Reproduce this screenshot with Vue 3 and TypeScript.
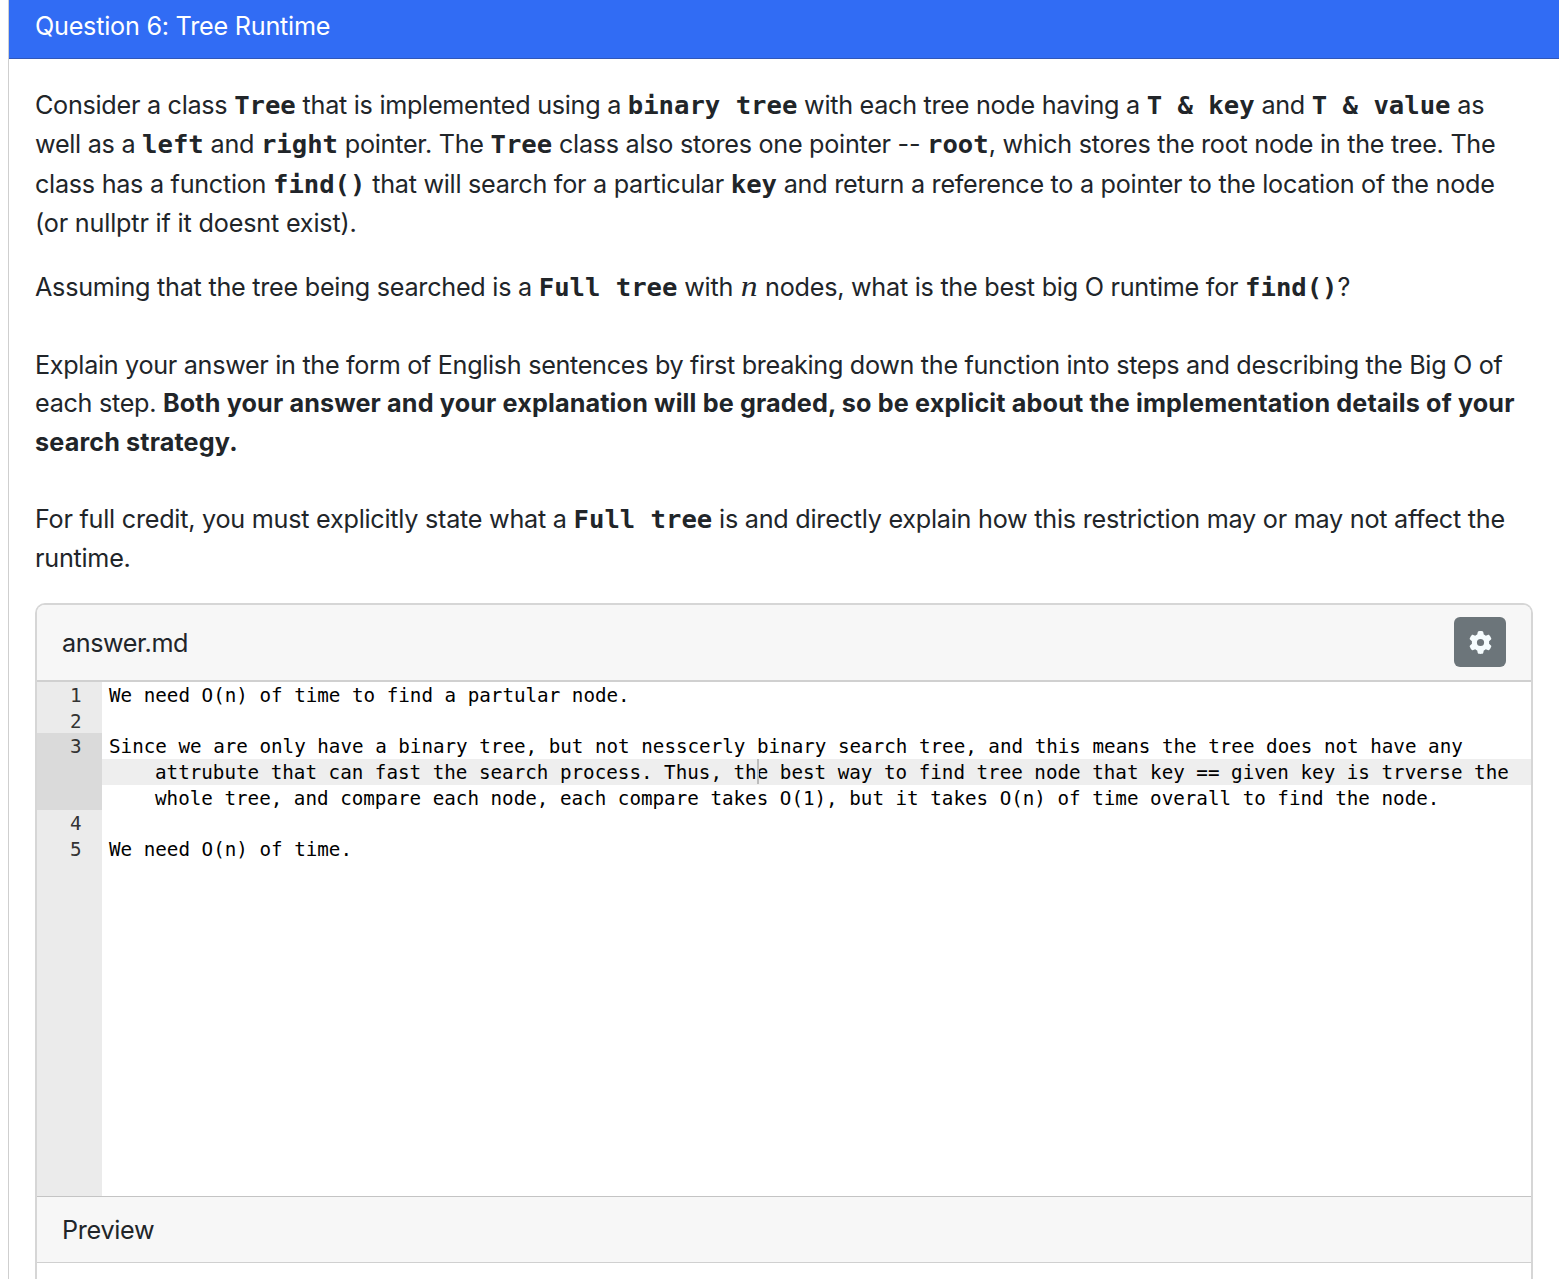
<script setup lang="ts">
interface Segment {
  text: string
  kind?: 'code' | 'bold' | 'math'
}
interface Line {
  parts: Segment[]
  spacing: number
}
interface Paragraph {
  name: string
  lines: Line[]
}

const t = (text: string): Segment => ({ text })
const c = (text: string): Segment => ({ text, kind: 'code' })
const b = (text: string): Segment => ({ text, kind: 'bold' })
const m = (text: string): Segment => ({ text, kind: 'math' })

const paragraphs: Paragraph[] = [
  {
    name: 'intro',
    lines: [
      { spacing: -0.285, parts: [t('Consider a class '), c('Tree'), t(' that is implemented using a '), c('binary tree'), t(' with each tree node having a '), c('T & key'), t(' and '), c('T & value'), t(' as')] },
      { spacing: -0.28, parts: [t('well as a '), c('left'), t(' and '), c('right'), t(' pointer. The '), c('Tree'), t(' class also stores one pointer -- '), c('root'), t(', which stores the root node in the tree. The')] },
      { spacing: -0.28, parts: [t('class has a function '), c('find()'), t(' that will search for a particular '), c('key'), t(' and return a reference to a pointer to the location of the node')] },
      { spacing: -0.18, parts: [t('(or nullptr if it doesnt exist).')] },
    ],
  },
  {
    name: 'prompt',
    lines: [
      { spacing: -0.26, parts: [t('Assuming that the tree being searched is a '), c('Full tree'), t(' with '), m('n'), t(' nodes, what is the best big O runtime for '), c('find()'), t('?')] },
    ],
  },
  {
    name: 'explain',
    lines: [
      { spacing: -0.315, parts: [t('Explain your answer in the form of English sentences by first breaking down the function into steps and describing the Big O of')] },
      { spacing: -0.3, parts: [t('each step. '), b('Both your answer and your explanation will be graded, so be explicit about the implementation details of your')] },
      { spacing: -0.3, parts: [b('search strategy.')] },
    ],
  },
  {
    name: 'credit',
    lines: [
      { spacing: -0.25, parts: [t('For full credit, you must explicitly state what a '), c('Full tree'), t(' is and directly explain how this restriction may or may not affect the')] },
      { spacing: -0.25, parts: [t('runtime.')] },
    ],
  },
]

const source = [
  { no: 1, rows: ['We need O(n) of time to find a partular node.'] },
  { no: 2, rows: [''] },
  {
    no: 3,
    current: 1,
    rows: [
      'Since we are only have a binary tree, but not nesscerly binary search tree, and this means the tree does not have any',
      'attrubute that can fast the search process. Thus, the best way to find tree node that key == given key is trverse the',
      'whole tree, and compare each node, each compare takes O(1), but it takes O(n) of time overall to find the node.',
    ],
  },
  { no: 4, rows: [''] },
  { no: 5, rows: ['We need O(n) of time.'] },
]
</script>

<template>
  <main class="card">
    <header class="title">Question 6: Tree Runtime</header>
    <div class="body">
      <section v-for="p in paragraphs" :key="p.name" :class="['para', p.name]">
        <div v-for="(line, i) in p.lines" :key="i" class="line" :style="{ letterSpacing: line.spacing + 'px' }">
          <span v-for="(s, j) in line.parts" :key="j" :class="s.kind">{{ s.text }}</span>
        </div>
      </section>
      <div class="panel">
        <div class="file-head">
          <span class="file-name">answer.md</span>
          <button class="settings" aria-label="Settings">
            <svg viewBox="0 0 512 512" width="23" height="23">
              <path fill="#f5fcfe" d="M495.9 166.6c3.2 8.7 .5 18.4-6.4 24.6l-43.3 39.4c1.1 8.3 1.7 16.8 1.7 25.4s-.6 17.1-1.7 25.4l43.3 39.4c6.9 6.2 9.6 15.9 6.4 24.6c-4.4 11.9-9.7 23.3-15.8 34.3l-4.7 8.1c-6.6 11-14 21.4-22.1 31.2c-5.9 7.2-15.7 9.6-24.5 6.8l-55.7-17.7c-13.4 10.3-28.2 18.9-44 25.4l-12.5 57.1c-2 9.1-9 16.3-18.2 17.8c-13.8 2.3-28 3.5-42.5 3.5s-28.7-1.2-42.5-3.5c-9.2-1.5-16.2-8.7-18.2-17.8l-12.5-57.1c-15.8-6.5-30.6-15.1-44-25.4L83.1 425.9c-8.8 2.8-18.6 .3-24.5-6.8c-8.1-9.8-15.5-20.2-22.1-31.2l-4.7-8.1c-6.1-11-11.4-22.4-15.8-34.3c-3.2-8.7-.5-18.4 6.4-24.6l43.3-39.4C64.6 273.1 64 264.6 64 256s.6-17.1 1.7-25.4L22.4 191.2c-6.9-6.2-9.6-15.9-6.4-24.6c4.4-11.9 9.7-23.3 15.8-34.3l4.7-8.1c6.6-11 14-21.4 22.1-31.2c5.9-7.2 15.7-9.6 24.5-6.8l55.7 17.7c13.4-10.3 28.2-18.9 44-25.4l12.5-57.1c2-9.1 9-16.3 18.2-17.8C227.3 1.2 241.5 0 256 0s28.7 1.2 42.5 3.5c9.2 1.5 16.2 8.7 18.2 17.8l12.5 57.1c15.8 6.5 30.6 15.1 44 25.4l55.7-17.7c8.8-2.8 18.6-.3 24.5 6.8c8.1 9.8 15.5 20.2 22.1 31.2l4.7 8.1c6.1 11 11.4 22.4 15.8 34.3zM256 336a80 80 0 1 0 0-160 80 80 0 1 0 0 160z" />
            </svg>
          </button>
        </div>
        <div class="editor">
          <div v-for="l in source" :key="l.no" :class="['entry', { active: l.current !== undefined }]">
            <div class="gutter">{{ l.no }}</div>
            <div class="code-rows">
              <div v-for="(r, i) in l.rows" :key="i" :class="['row', { wrapped: i > 0, current: l.current === i }]">{{ r }}<i v-if="l.current === i" class="caret"></i></div>
            </div>
          </div>
          <div class="entry rest"><div class="gutter"></div></div>
        </div>
        <div class="preview-head">Preview</div>
      </div>
    </div>
  </main>
</template>

<style>
body {
  overflow: hidden;
  background: #fff;
}
</style>

<style scoped>
.card {
  box-sizing: border-box;
  height: 1279px;
  margin-left: 8px;
  overflow: hidden;
  border-left: 1px solid #cfcfcf;
  color: #212529;
  font: 25.2px/38.6px Inter, sans-serif;
}
.title {
  box-sizing: border-box;
  height: 59px;
  padding: 7px 26px 0;
  border-bottom: 1px solid #3157b8;
  background: #316cf4;
  color: #fff;
  letter-spacing: -0.24px;
}
.body {
  padding: 27px 26px 0;
}
.line {
  height: 38.6px;
  white-space: pre;
}
.intro .line {
  height: 39.3px;
}
.intro {
  margin-bottom: 25px;
}
.prompt,
.explain {
  margin-bottom: 38.8px;
}
.credit {
  margin-bottom: 25.6px;
}
.code {
  font: bold 25.6px/1 "DejaVu Sans Mono", monospace;
  letter-spacing: 0;
}
.bold {
  font-weight: 700;
  letter-spacing: 0.14px;
}
.math {
  display: inline-block;
  margin: 0 2.2px;
  font: italic 28.5px/1 "Liberation Serif", serif;
  transform: scaleX(1.18);
}
.panel {
  box-sizing: border-box;
  width: 1498px;
  height: 700px;
  border: 2px solid #d6d6d6;
  border-bottom: 0;
  border-radius: 10px 10px 0 0;
}
.file-head {
  display: flex;
  align-items: center;
  justify-content: space-between;
  box-sizing: border-box;
  height: 77px;
  padding: 0 25px;
  border-bottom: 2px solid #d0d0d0;
  border-radius: 8px 8px 0 0;
  background: #f7f7f7;
}
.file-name {
  padding-top: 1px;
  letter-spacing: -0.42px;
}
.settings {
  display: flex;
  align-items: center;
  justify-content: center;
  width: 52px;
  height: 50px;
  padding: 0;
  border: 0;
  border-radius: 6px;
  background: #6c757a;
}
.editor {
  display: flex;
  flex-direction: column;
  height: 514px;
  color: #000;
  font: 19.23px/25.7px "DejaVu Sans Mono", monospace;
}
.entry {
  display: flex;
}
.rest {
  flex: 1;
}
.gutter {
  box-sizing: border-box;
  width: 65px;
  padding: 1px 20.5px 0 0;
  background: #ebebeb;
  color: #333;
  text-align: right;
}
.entry:not(.rest) .gutter {
  min-height: 25.7px;
  margin-bottom: -1px;
}
.active .gutter {
  background: #dadada;
}
.code-rows {
  flex: 1;
}
.row {
  position: relative;
  box-sizing: border-box;
  height: 25.7px;
  padding: 1px 0 0 7px;
  white-space: pre;
}
.wrapped {
  padding-left: 53px;
}
.current {
  background: #eee;
}
.caret {
  position: absolute;
  top: 0;
  left: 655px;
  width: 2px;
  height: 25px;
  background: #bcbcbc;
}
.preview-head {
  box-sizing: border-box;
  height: 67px;
  padding: 14px 25px 0;
  border-top: 1px solid #c4c4c4;
  border-bottom: 1px solid #d0d0d0;
  background: #f7f7f7;
  letter-spacing: -0.3px;
}
</style>
